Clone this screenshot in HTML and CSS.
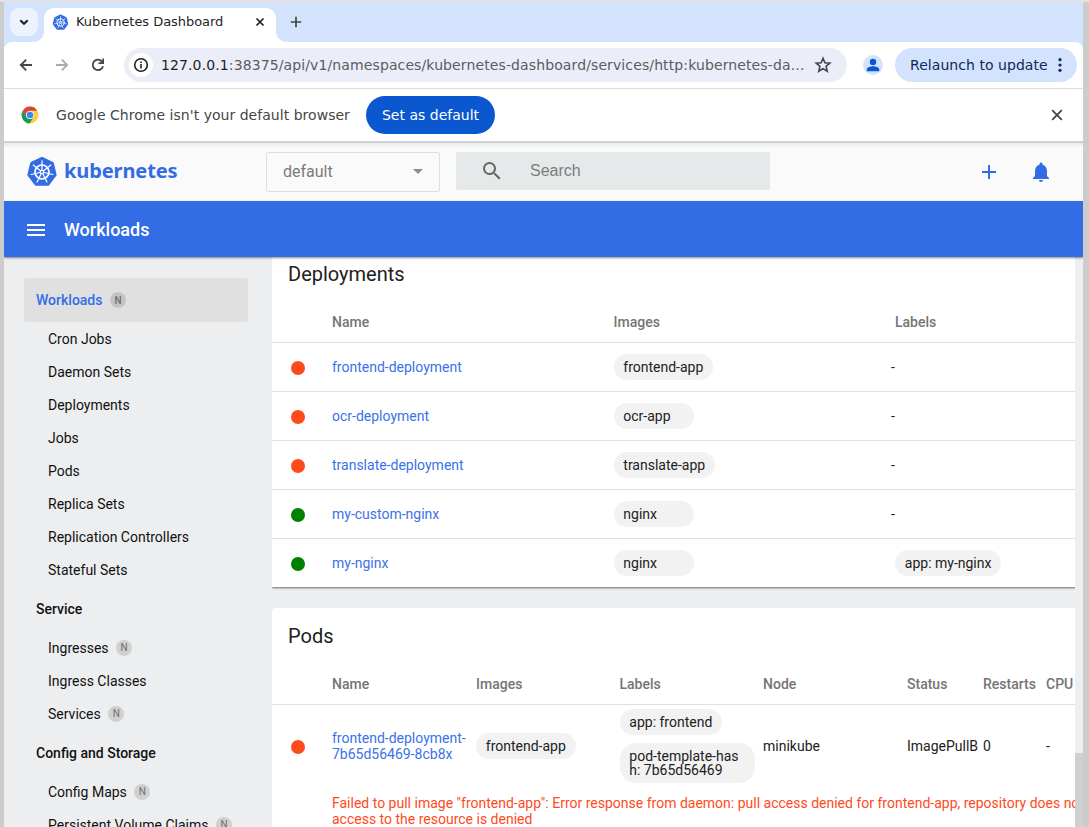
FILE: index.html
```html
<!DOCTYPE html>
<html lang="en">
<head>
<meta charset="utf-8">
<title>Kubernetes Dashboard</title>
<link rel="stylesheet" href="styles.css">
</head>
<body>
<svg class="defs" aria-hidden="true">
  <symbol id="helm" viewBox="-16 -16 32 32">
    <path d="M0-13.6L10.4-8.6L13.1 2.9L5.9 12.3H-5.9L-13.1 2.9L-10.4-8.6Z" fill="#326ce5" stroke="#326ce5" stroke-width="3" stroke-linejoin="round"/>
    <g fill="none" stroke="#fff" stroke-width="1.2" stroke-linecap="round">
      <circle r="7" stroke-width="1.7"/>
      <path d="M0-2V-11.2M1.6-1.3L8.8-7M2 .5L10.9 2.5M.9 1.8L4.9 10.1M-.9 1.8L-4.9 10.1M-2 .5L-10.9 2.5M-1.6-1.3L-8.8-7"/>
      <circle r="1.7"/>
    </g>
  </symbol>
</svg>
<div class="window">
  <div class="tabstrip">
    <button class="tab-search"><svg width="12" height="12" viewBox="0 0 12 12"><path d="M2.3 4.2L6 7.8L9.7 4.2" fill="none" stroke="#1f1f1f" stroke-width="2"/></svg></button>
    <div class="tab">
      <svg class="favicon" width="17" height="17"><use href="#helm"/></svg>
      <span class="tab-title">Kubernetes Dashboard</span>
      <svg class="tab-close" width="10" height="10" viewBox="0 0 10 10"><path d="M1.5 1.5L8.5 8.5M8.5 1.5L1.5 8.5" stroke="#1f1f1f" stroke-width="1.7"/></svg>
    </div>
    <svg class="new-tab" width="12" height="12" viewBox="0 0 12 12"><path d="M6 .8V11.2M.8 6H11.2" stroke="#444746" stroke-width="1.7"/></svg>
  </div>
  <div class="toolbar">
    <svg class="nav-icon" width="14" height="14" viewBox="0 0 14 14"><path d="M13 7H2M7.2 1.6L1.8 7L7.2 12.4" fill="none" stroke="#444746" stroke-width="1.8"/></svg>
    <svg class="nav-icon" width="14" height="14" viewBox="0 0 14 14"><path d="M1 7H12M6.8 1.6L12.2 7L6.8 12.4" fill="none" stroke="#ababab" stroke-width="1.8"/></svg>
    <svg class="nav-icon reload" width="14" height="14" viewBox="0 0 14 14"><path d="M12 8.2A5.2 5.2 0 1 1 11 3.6L12.4 5" fill="none" stroke="#444746" stroke-width="1.8"/><path d="M13 .6V6H7.6V4.3H11.3V.6Z" fill="#444746"/></svg>
    <div class="omnibox">
      <span class="site-info"><svg width="16" height="16" viewBox="0 0 16 16"><circle cx="8" cy="8" r="6.3" fill="none" stroke="#1f1f1f" stroke-width="1.6"/><path d="M8 7V11.5M8 4.4V6" stroke="#1f1f1f" stroke-width="1.6"/></svg></span>
      <span class="url"><b>127.0.0.1</b>:38375/api/v1/namespaces/kubernetes-dashboard/services/http:kubernetes-da…</span>
      <svg class="star" width="18" height="18" viewBox="0 0 18 18"><path d="M9 2.3L10.9 6.8L15.8 7.2L12.1 10.4L13.2 15.2L9 12.6L4.8 15.2L5.9 10.4L2.2 7.2L7.1 6.8Z" fill="none" stroke="#444746" stroke-width="1.6"/></svg>
    </div>
    <span class="profile"><svg width="20" height="20" viewBox="0 0 20 20"><circle cx="10" cy="7" r="3.2"/><path d="M3.8 16.2V14.2C3.8 12.2 7.5 11.2 10 11.2S16.2 12.2 16.2 14.2V16.2Z"/></svg></span>
    <button class="relaunch"><span>Relaunch to update</span><svg width="4" height="14" viewBox="0 0 4 14"><circle cx="2" cy="1.7" r="1.6"/><circle cx="2" cy="7" r="1.6"/><circle cx="2" cy="12.3" r="1.6"/></svg></button>
  </div>
  <div class="infobar">
    <svg class="chrome-logo" width="18" height="18" viewBox="-9 -9 18 18">
      <circle r="8.4" fill="#ffcd40"/>
      <path d="M-7.3-4.2A8.4 8.4 0 0 0-.4 8.4L3.6 2.1L0 0L-3.6 2Z" fill="#0f9d58"/>
      <path d="M-7.3-4.2A8.4 8.4 0 0 1 7.3-4.2H0L-3.6 2Z" fill="#db4437"/>
      <circle r="4.1" fill="#fff"/><circle r="3.3" fill="#4285f4"/>
    </svg>
    <span class="info-text">Google Chrome isn't your default browser</span>
    <button class="set-default">Set as default</button>
    <svg class="info-close" width="12" height="12" viewBox="0 0 12 12"><path d="M1.2 1.2L10.8 10.8M10.8 1.2L1.2 10.8" stroke="#444746" stroke-width="1.8"/></svg>
  </div>

  <div class="header">
    <svg class="logo" width="32" height="32"><use href="#helm"/></svg>
    <span class="brand">kubernetes</span>
    <div class="namespace"><span>default</span><i class="caret"></i></div>
    <div class="search">
      <svg width="24" height="24" viewBox="0 0 24 24"><path fill="#666" d="M15.5 14h-.79l-.28-.27A6.47 6.47 0 0 0 16 9.5 6.5 6.5 0 1 0 9.5 16c1.61 0 3.09-.59 4.23-1.57l.27.28v.79l5 4.99L20.49 19l-4.99-5zm-6 0C7.01 14 5 11.99 5 9.5S7.01 5 9.5 5 14 7.01 14 9.5 11.99 14 9.5 14z"/></svg>
      <span>Search</span>
    </div>
    <div class="actions">
      <svg width="24" height="24" viewBox="0 0 24 24"><path fill="#326ce5" d="M19 13h-6v6h-2v-6H5v-2h6V5h2v6h6v2z"/></svg>
      <svg width="24" height="24" viewBox="0 0 24 24"><path fill="#326ce5" d="M12 22c1.1 0 2-.9 2-2h-4c0 1.1.89 2 2 2zm6-6v-5c0-3.07-1.64-5.64-4.5-6.32V4c0-.83-.67-1.5-1.5-1.5s-1.5.67-1.5 1.5v.68C7.63 5.36 6 7.92 6 11v5l-2 2v1h16v-1l-2-2z"/></svg>
    </div>
  </div>
  <div class="actionbar">
    <svg width="24" height="24" viewBox="0 0 24 24"><path fill="#fff" d="M3 18h18v-2H3v2zm0-5h18v-2H3v2zm0-7v2h18V6H3z"/></svg>
    <span>Workloads</span>
  </div>

  <div class="body">
    <nav class="sidebar">
      <div class="group active">Workloads <i class="n">N</i></div>
      <div class="item">Cron Jobs</div>
      <div class="item">Daemon Sets</div>
      <div class="item">Deployments</div>
      <div class="item">Jobs</div>
      <div class="item">Pods</div>
      <div class="item">Replica Sets</div>
      <div class="item">Replication Controllers</div>
      <div class="item">Stateful Sets</div>
      <div class="group">Service</div>
      <div class="item">Ingresses <i class="n">N</i></div>
      <div class="item">Ingress Classes</div>
      <div class="item">Services <i class="n">N</i></div>
      <div class="group">Config and Storage</div>
      <div class="item">Config Maps <i class="n">N</i></div>
      <div class="item">Persistent Volume Claims <i class="n">N</i></div>
    </nav>
    <main class="content">
      <section class="card deployments">
        <h2>Deployments</h2>
        <div class="row head"><span></span><span>Name</span><span>Images</span><span>Labels</span></div>
        <div class="row"><i class="dot bad"></i><a>frontend-deployment</a><span><b class="chip">frontend-app</b></span><span class="none">-</span></div>
        <div class="row"><i class="dot bad"></i><a>ocr-deployment</a><span><b class="chip">ocr-app</b></span><span class="none">-</span></div>
        <div class="row"><i class="dot bad"></i><a>translate-deployment</a><span><b class="chip">translate-app</b></span><span class="none">-</span></div>
        <div class="row"><i class="dot ok"></i><a>my-custom-nginx</a><span><b class="chip">nginx</b></span><span class="none">-</span></div>
        <div class="row"><i class="dot ok"></i><a>my-nginx</a><span><b class="chip">nginx</b></span><span><b class="chip">app: my-nginx</b></span></div>
      </section>
      <section class="card pods">
        <h2>Pods</h2>
        <div class="row head"><span></span><span>Name</span><span>Images</span><span>Labels</span><span>Node</span><span>Status</span><span>Restarts</span><span>CPU</span></div>
        <div class="row pod"><i class="dot bad"></i><a>frontend-deployment-<br>7b65d56469-8cb8x</a><span><b class="chip">frontend-app</b></span><span class="labels"><b class="chip">app: frontend</b><b class="chip tall">pod-template-has<br>h: 7b65d56469</b></span><span>minikube</span><span>ImagePullB</span><span>0</span><span>-</span></div>
        <p class="error">Failed to pull image "frontend-app": Error response from daemon: pull access denied for frontend-app, repository does not<br>access to the resource is denied</p>
      </section>
    </main>
    <div class="scrollbar"><div class="thumb"></div></div>
  </div>
</div>
</body>
</html>
```
FILE: styles.css
```css
* { box-sizing: border-box; }
body {
  margin: 0;
  width: 1089px;
  height: 827px;
  overflow: hidden;
  background: #ccc;
  border-top: 2px solid #e2e2e2;
  font: 14px Roboto, sans-serif;
}
svg { display: block; flex: none; }
button { border: 0; padding: 0; margin: 0; font: inherit; }
.defs { width: 0; height: 0; position: absolute; }
.window {
  display: flex;
  flex-direction: column;
  width: 1079px;
  height: 825px;
  margin-left: 4px;
  overflow: hidden;
  background: #d3e3fd;
}

/* Browser chrome */
.tabstrip, .toolbar, .infobar { font-family: "DejaVu Sans", sans-serif; flex: none; }
.tabstrip { display: flex; height: 40px; padding: 6px 0 0 6px; }
.tab-search {
  display: flex;
  align-items: center;
  justify-content: center;
  width: 28px;
  height: 28px;
  border-radius: 9px;
  background: #ecf3fe;
}
.tab {
  position: relative;
  display: flex;
  align-items: center;
  width: 232px;
  height: 34px;
  margin-left: 6px;
  padding: 0 11px 6px 8px;
  border-radius: 10px 10px 0 0;
  background: #fff;
}
.tab::before, .tab::after {
  content: "";
  position: absolute;
  bottom: 0;
  width: 10px;
  height: 10px;
}
.tab::before { left: -10px; background: radial-gradient(circle at 0 0, transparent 9.5px, #fff 10px); }
.tab::after { right: -10px; background: radial-gradient(circle at 100% 0, transparent 9.5px, #fff 10px); }
.tab-title { margin: -2px 0 0 7px; font-size: 13px; letter-spacing: -.05px; color: #1f1f1f; white-space: nowrap; }
.tab-close { margin-left: auto; }
.new-tab { margin: 8px 0 0 14px; }
.toolbar {
  display: flex;
  align-items: center;
  height: 47px;
  padding: 0 6px 0 15px;
  border-bottom: 1px solid #dcdfe1;
  border-radius: 8px 8px 0 0;
  background: #fff;
}
.nav-icon { margin-right: 22px; }
.reload { margin-right: 19px; }
.omnibox {
  display: flex;
  align-items: center;
  width: 723px;
  height: 34px;
  padding: 0 15px 0 5px;
  border-radius: 17px;
  background: #ebeef8;
}
.site-info {
  display: flex;
  align-items: center;
  justify-content: center;
  width: 24px;
  height: 24px;
  border-radius: 50%;
  background: #fff;
}
.url { margin-left: 8px; font-size: 14px; letter-spacing: .112px; color: #5a5d61; white-space: nowrap; }
.url b { font-weight: 400; color: #1f1f1f; }
.star { margin-left: auto; }
.profile { width: 20px; height: 20px; margin: 0 12px 0 16px; border-radius: 50%; background: #d3e3fd; fill: #0b57d0; }
.relaunch {
  display: flex;
  align-items: center;
  justify-content: space-between;
  width: 182px;
  height: 34px;
  padding: 0 15px;
  border-radius: 17px;
  background: #d3e3fd;
  color: #0f2858;
  fill: #0f2858;
  font-size: 14px;
  letter-spacing: .05px;
  white-space: nowrap;
}
.infobar { display: flex; align-items: center; height: 52px; padding: 0 20px 0 17px; background: #fff; }
.info-text { width: 310px; padding-left: 17px; font-size: 14px; letter-spacing: .03px; color: #444746; white-space: nowrap; }
.set-default { width: 129px; height: 38px; margin-left: 17px; border-radius: 19px; background: #0b57d0; color: #fff; font-size: 14px; white-space: nowrap; }
.info-close { margin-left: auto; }

/* Dashboard header */
.header {
  display: flex;
  align-items: center;
  flex: none;
  height: 60px;
  padding: 0 30px 0 22px;
  border-top: 2px solid #cfd2d1;
  background: linear-gradient(#e6e8e7, #fafafa 5px);
}
.brand { width: 201px; margin: -2px 0 0 6px; font: 700 20px/28px "Noto Sans", sans-serif; letter-spacing: -.1px; color: #326ce5; }
.namespace {
  display: flex;
  align-items: center;
  justify-content: space-between;
  width: 174px;
  height: 40px;
  margin: -1px 0 0 1px;
  padding: 0 16px;
  border: 1px solid #dedede;
  border-radius: 2px;
  font-size: 16px;
  color: #7c7c7c;
}
.caret { border: 5px solid transparent; border-top-color: #8d8d8d; border-bottom: 0; }
.search {
  display: flex;
  align-items: center;
  width: 314px;
  height: 38px;
  margin: -2px 0 0 16px;
  padding-left: 24px;
  border-radius: 2px;
  background: #e5e9e9;
  font: 16px "Liberation Sans", sans-serif;
  color: #7b7d7d;
}
.search span { margin-left: 26px; }
.actions { display: flex; gap: 28px; margin-left: auto; }
.actionbar {
  position: relative;
  z-index: 1;
  display: flex;
  align-items: center;
  flex: none;
  gap: 16px;
  height: 56px;
  padding: 1px 0 0 20px;
  background: #326de6;
  box-shadow: 0 1px 2px rgba(0, 0, 0, .45);
  color: #fff;
  font-size: 18px;
  font-weight: 500;
}

/* Navigation */
.body { display: flex; flex: 1; min-height: 0; background: #eceef0; }
.sidebar { flex: none; width: 268px; padding: 21px 24px 0 20px; color: #111; white-space: nowrap; }
.group, .item { display: flex; align-items: center; }
.group { height: 44px; margin-bottom: 1px; padding-left: 12px; font-weight: 500; }
.item { height: 33px; padding: 0 0 2px 24px; }
.active { border-radius: 2px; background: #e0e0e0; color: #326de6; }
.n {
  display: flex;
  align-items: center;
  justify-content: center;
  width: 16px;
  height: 16px;
  margin-left: 7.5px;
  border-radius: 50%;
  background: #cfd0d0;
  color: #6e6e6e;
  font-size: 10px;
  font-style: normal;
}
.active .n { background: #c4c4c4; font-weight: 500; }

/* Resource cards */
.content { flex: none; width: 803px; overflow: hidden; }
.card { width: 900px; background: #fff; color: #212121; box-shadow: 0 1px 2px rgba(0, 0, 0, .55); }
.card h2 { margin: 0; padding-left: 16px; font-size: 20px; font-weight: 400; line-height: 34px; }
.card a { color: #3a72e7; line-height: 16px; }
.row { display: grid; align-items: center; height: 49px; border-top: 1px solid #e0e0e0; }
.head { height: 40px; border: 0; color: #757575; font-weight: 500; }
.deployments { height: 330px; }
.deployments h2 { height: 45px; }
.deployments .row { grid-template-columns: 60px 281.5px 281.5px 1fr; }
.pods { height: 260px; margin-top: 21px; border-radius: 4px 4px 0 0; box-shadow: none; }
.pods h2 { height: 56px; line-height: 56px; }
.pods .row { grid-template-columns: 60px 144px 143.5px 143.5px 144px 76px 63px 1fr; white-space: nowrap; }
.dot { width: 14px; height: 14px; margin: 2px 0 0 19px; border-radius: 50%; }
.bad { background: #ff4a1c; }
.ok { background: #008000; }
.none { margin-left: -4px; }
.chip {
  display: inline-block;
  min-width: 80px;
  height: 26px;
  padding: 0 9.8px;
  border-radius: 13px;
  background: #f2f2f2;
  font-weight: 400;
  line-height: 26px;
  vertical-align: middle;
}
.pods .row.pod { height: 82px; }
.labels { display: flex; flex-direction: column; align-items: flex-start; gap: 8px; }
.chip.tall { width: 135px; height: 40px; padding-top: 6px; border-radius: 16px; line-height: 14px; }
.error { margin: 9px 0 0 60px; color: #ff4a1c; line-height: 16px; white-space: nowrap; }
.scrollbar { flex: none; width: 8px; padding-top: 496px; background: #eceef0; }
.thumb { height: 80px; background: #cfd0d2; }
```
